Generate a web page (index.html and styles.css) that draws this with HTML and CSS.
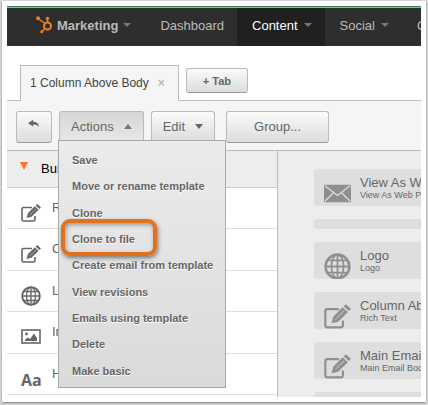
FILE: index.html
```html
<!DOCTYPE html>
<html lang="en">
<head>
    <meta charset="UTF-8">
    <title>Template Builder</title>
    <link rel="stylesheet" href="styles.css">
</head>
<body>
<!-- shared icons -->
<svg class="sprite" width="0" height="0" aria-hidden="true">
    <symbol id="icon-edit" viewBox="0 0 20 18">
        <path d="M11 3.5H2.5Q1 3.5 1 5V15.5Q1 17 2.5 17H12.5Q14 17 14 15.5V12" fill="none" stroke="currentColor" stroke-width="1.6"/>
        <path d="M5.5 14L7 9L13.8 2.200L17.600 5.800L10.500 12.800Z" fill="currentColor"/>
        <path d="M14.600 1.500L16.200 0L20 3.400L18.400 5Z" fill="currentColor"/>
        <path d="M8.500 11L15 4.700" stroke="#fff" stroke-width="0.7" opacity="0.6"/>
    </symbol>
    <symbol id="icon-globe" viewBox="0 0 20 20">
        <g fill="none" stroke="currentColor">
            <circle cx="10" cy="10" r="8.8" stroke-width="1.9"/>
            <ellipse cx="10" cy="10" rx="4.5" ry="8.8" stroke-width="1.3"/>
            <path d="M10 1V19M1 10H19M3 5.5H17M3 14.5H17" stroke-width="1.3"/>
        </g>
    </symbol>
</svg>
<div class="frame">
    <div class="app">
        <nav class="nav">
            <a href="#" class="nav-link brand">
                <svg class="logo" viewBox="0 0 16 18">
                    <g fill="none" stroke="#f47b20">
                        <circle cx="11.5" cy="10" r="3.5" stroke-width="2"/>
                        <path d="M2 2.5L9 7.5M11.5 2.5V7M9 12.5L6 15.5" stroke-width="1.5"/>
                    </g>
                    <g fill="#f47b20">
                        <circle cx="2" cy="2.2" r="2"/>
                        <circle cx="11.5" cy="2.5" r="1.7"/>
                        <circle cx="5.7" cy="15.7" r="1.5"/>
                    </g>
                </svg>
                Marketing <i class="caret"></i>
            </a>
            <a href="#" class="nav-link">Dashboard</a>
            <a href="#" class="nav-link active">Content <i class="caret"></i></a>
            <a href="#" class="nav-link">Social <i class="caret"></i></a>
            <a href="#" class="nav-link">C</a>
        </nav>

        <div class="tabs">
            <div class="tab">1 Column Above Body <button class="close">×</button></div>
            <div class="tab-rest"><button class="btn btn-small">+ Tab</button></div>
        </div>

        <div class="toolbar">
            <button class="btn btn-back" aria-label="Back">
                <svg width="14" height="10" viewBox="0 0 14 10"><path d="M0 4L6 0V2.5C10 2.5 12.5 4.5 13 8.5C11 6 9 5.5 6 5.5V8Z" fill="#666"/></svg>
            </button>
            <div class="dropdown">
                <button class="btn open">Actions <i class="caret up"></i></button>
                <div class="menu">
                    <a href="#">Save</a>
                    <a href="#">Move or rename template</a>
                    <a href="#">Clone</a>
                    <a href="#" class="marked">Clone to file</a>
                    <a href="#">Create email from template</a>
                    <a href="#">View revisions</a>
                    <a href="#">Emails using template</a>
                    <a href="#">Delete</a>
                    <a href="#">Make basic</a>
                </div>
            </div>
            <button class="btn">Edit <i class="caret"></i></button>
            <button class="btn btn-group">Group...</button>
        </div>

        <div class="workspace">
            <div class="sidebar">
                <div class="section"><i class="arrow"></i>Bui</div>
                <div class="row"><svg class="row-icon"><use href="#icon-edit"/></svg><span>R</span></div>
                <div class="row"><svg class="row-icon"><use href="#icon-edit"/></svg><span>C</span></div>
                <div class="row"><svg class="row-icon"><use href="#icon-globe"/></svg><span>L</span></div>
                <div class="row">
                    <svg class="row-icon" viewBox="0 0 20 20">
                        <rect x="1" y="3" width="18" height="13" fill="none" stroke="currentColor" stroke-width="1.6"/>
                        <circle cx="5.5" cy="7" r="1.4" fill="currentColor"/>
                        <path d="M4 14V12.5L7 10.5L9 12L13 6.5L16 11V14Z" fill="currentColor"/>
                    </svg>
                    <span>Im</span>
                </div>
                <div class="row"><b class="row-icon letters">Aa</b><span>H</span></div>
            </div>
            <div class="canvas">
                <div class="module">
                    <svg class="module-icon" viewBox="0 0 28 20">
                        <rect y="1" width="28" height="18" rx="1" fill="currentColor"/>
                        <path d="M1 2L14 12L27 2M1 18L10 9M27 18L18 9" fill="none" stroke="#dedede" stroke-width="1.3"/>
                    </svg>
                    <div><h4>View As Web</h4><p>View As Web P</p></div>
                </div>
                <div class="module empty"></div>
                <div class="module">
                    <svg class="module-icon"><use href="#icon-globe"/></svg>
                    <div><h4>Logo</h4><p>Logo</p></div>
                </div>
                <div class="module">
                    <svg class="module-icon"><use href="#icon-edit"/></svg>
                    <div><h4>Column Abo</h4><p>Rich Text</p></div>
                </div>
                <div class="module">
                    <svg class="module-icon"><use href="#icon-edit"/></svg>
                    <div><h4>Main Email</h4><p>Main Email Bod</p></div>
                </div>
                <div class="module"></div>
            </div>
        </div>
    </div>
</div>
</body>
</html>
```

FILE: styles.css
```css
*, *::after {
    box-sizing: border-box;
}

body {
    height: 100vh;
    margin: 0;
    padding: 1px 2px 3px 2px;
    background: #dcdcdc;
    font-family: "Liberation Sans", Arial, sans-serif;
    font-size: 13px;
    color: #666;
    overflow: hidden;
}

a {
    color: inherit;
    text-decoration: none;
}

.sprite {
    position: absolute;
}

.frame {
    height: 100%;
    padding: 5px;
    background: #fff;
    box-shadow: 0 1px 2px #777;
}

.app {
    display: flex;
    flex-direction: column;
    height: 100%;
    overflow: hidden;
}

/* top navigation */
.nav {
    display: flex;
    flex: none;
    height: 40px;
    border-top: 1px solid #3c7f48;
    box-shadow: inset 0 1px #aaa;
    background: #2e2e2e;
    color: #bbb;
}

.nav-link {
    display: flex;
    flex: none;
    align-items: center;
    gap: 6px;
    margin-top: 1px;
    padding: 0 13px 4px 15px;
}

.brand {
    gap: 5px;
    padding-left: 29px;
    padding-right: 14px;
    font-weight: bold;
}

.logo {
    width: 16px;
    height: 18px;
}

.active {
    background: #202020;
    color: #fff;
}

.caret {
    border: 4px solid transparent;
    border-top-color: #777;
    border-bottom-width: 0;
}

/* tabs */
.tabs {
    display: flex;
    flex: none;
    height: 55px;
    padding-top: 19px;
}

.tabs::before {
    content: "";
    width: 13px;
    border-bottom: 1px solid #bbb;
}

.tab {
    display: flex;
    align-items: center;
    gap: 9px;
    padding: 0 13px 2px 9px;
    border: 1px solid #bbb;
    border-bottom: 0;
    background: #f5f5f5;
    font-size: 12px;
    color: #444;
}

.close {
    padding: 0;
    border: 0;
    background: none;
    font: bold 12px "Liberation Sans", Arial, sans-serif;
    color: #bbb;
}

.tab-rest {
    flex: 1;
    padding: 3px 0 0 7px;
    border-bottom: 1px solid #bbb;
}

/* buttons */
.btn {
    display: flex;
    align-items: center;
    justify-content: center;
    gap: 10px;
    height: 32px;
    padding: 0 11px 2px;
    border: 1px solid #bbb;
    border-bottom-color: #999;
    border-radius: 3px;
    background: linear-gradient(#fbfbfb, #dcdcdc);
    font-family: inherit;
    font-size: 13px;
    color: #666;
}

.btn-small {
    height: 25px;
    padding: 0 16px;
    font-size: 11px;
    font-weight: bold;
}

.btn-back {
    width: 36px;
    padding-bottom: 6px;
}

.btn-group {
    padding: 0 27px 2px;
    margin-left: 4px;
}

.btn .caret {
    border-width: 5px 4px 0;
    border-top-color: #666;
}

.btn .up {
    border-width: 0 4px 5px;
    border-bottom-color: #777;
}

.open {
    background: linear-gradient(#d6d6d6, #e8e8e8);
}

/* toolbar */
.toolbar {
    display: flex;
    flex: none;
    gap: 7px;
    height: 50px;
    padding: 10px 9px;
    border-bottom: 1px solid #bbb;
    background: #f5f5f5;
}

.dropdown {
    position: relative;
}

.menu {
    position: absolute;
    top: 29px;
    left: -1px;
    z-index: 10;
    padding: 6px 0 3px;
    border: 1px solid #aaa;
    background: linear-gradient(#ebebeb, #dadada);
    font-size: 11px;
    font-weight: bold;
    white-space: nowrap;
}

.menu a {
    display: block;
    position: relative;
    padding: 0 12px 0 13px;
    line-height: 26px;
    text-shadow: 0 1px #fff;
}

.menu a:nth-child(3n+2) {
    padding-bottom: 1px;
}

.marked::after {
    content: "";
    position: absolute;
    top: -7px;
    left: 2px;
    width: 96px;
    height: 37px;
    border: 4px solid #e2711d;
    border-radius: 9px;
    box-shadow: 1px 2px 4px #777, inset 1px 2px 4px #999;
}

/* workspace */
.workspace {
    display: flex;
    flex: 1;
    min-height: 0;
}

.sidebar {
    flex: none;
    width: 271px;
    border-right: 1px solid #bbb;
}

.section {
    display: flex;
    align-items: center;
    gap: 13px;
    height: 37px;
    padding: 0 13px 2px;
    border-bottom: 1px solid #ccc;
    background: #ededed;
    color: #000;
}

.arrow {
    margin-bottom: 5px;
    border: 4px solid transparent;
    border-top: 8px solid #ff7324;
    border-bottom: 0;
}

.row {
    display: flex;
    gap: 11px;
    height: 41px;
    padding: 12px 14px 0;
    border-bottom: 1px solid #ddd;
}

.row:nth-child(odd) {
    height: 42px;
}

.row-icon {
    flex: none;
    width: 20px;
    height: 20px;
    margin-top: 3px;
}

.letters {
    font: bold 16px/22px "Open Sans", sans-serif;
}

.canvas {
    display: flex;
    flex: 1;
    flex-direction: column;
    gap: 13px;
    min-width: 0;
    padding: 18px 0 0 36px;
    background: #ededed;
    overflow: hidden;
}

.module {
    display: flex;
    flex: none;
    gap: 9px;
    height: 37px;
    padding: 7px 0 0 10px;
    border-radius: 3px 0 0 3px;
    background: #dedede;
    white-space: nowrap;
    overflow: hidden;
}

.empty {
    height: 10px;
}

.module-icon {
    flex: none;
    width: 27px;
    height: 27px;
    margin-top: 4px;
    color: #8f8f8f;
}

.module h4,
.module p {
    margin: 0;
    font-weight: normal;
    line-height: 14px;
}

.module h4 {
    font-size: 13px;
}

.module p {
    font-size: 9px;
    line-height: 10px;
}
```
